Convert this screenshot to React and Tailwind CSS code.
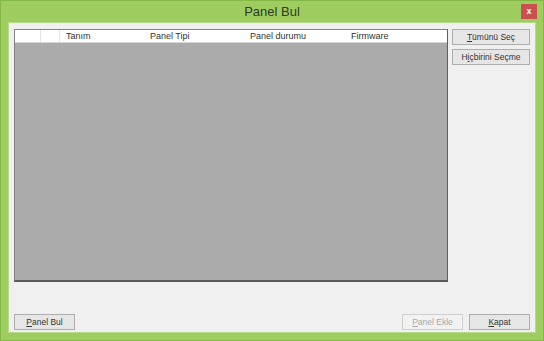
function Btn({ children, disabled, className = "" }) {
  return (
    <button
      className={`h-[16px] border text-[8.5px] leading-none flex items-center justify-center ${
        disabled
          ? "border-[#cfcfcf] bg-[#f2f2f2] text-[#a8a8a8]"
          : "border-[#adadad] bg-[#e6e6e6] text-[#333]"
      } ${className}`}
    >
      {children}
    </button>
  );
}

export default function App() {
  return (
    <div
      className="w-[544px] h-[341px] bg-[#9fcc5e] border border-[#83b846] flex flex-col"
      style={{ fontFamily: '"Liberation Sans", Arial, sans-serif' }}
    >
      <div className="h-[21px] flex items-center relative shrink-0">
        <div className="flex-1 text-center text-[13px] text-[#2f3a25] pt-[1px]">Panel Bul</div>
        <div className="absolute right-[6px] top-[3px] w-[16px] h-[15px] bg-[#c9504f] text-white text-[9px] font-bold flex items-center justify-center">
          x
        </div>
      </div>
      <div className="flex-1 mx-[7px] mb-[7px] bg-[#f0f0f0] border border-[#b7d98a] flex flex-col px-[5px] pt-[6px] pb-[2px]">
        <div className="flex gap-[4px]">
          <div className="w-[435px] h-[253px] border border-[#828282] border-r-[#5e5e5e] border-b-[2px] border-b-[#5a5a5a] bg-[#ababab] flex flex-col">
            <div className="h-[13px] bg-white border-b border-[#d5d5d5] flex text-[9px] text-[#333] leading-[12px]">
              <div className="w-[26px] border-r border-[#e3e3e3]" />
              <div className="w-[19px] border-r border-[#e3e3e3]" />
              <div className="w-[90px] pl-[6px]">Tanım</div>
              <div className="w-[100px]">Panel Tipi</div>
              <div className="w-[101px]">Panel durumu</div>
              <div className="flex-1">Firmware</div>
            </div>
          </div>
          <div className="flex flex-col gap-[4px]">
            <Btn className="w-[78px] h-[15px]">
              <span><u>T</u>ümünü Seç</span>
            </Btn>
            <Btn className="w-[78px]">
              <span>H<u>i</u>çbirini Seçme</span>
            </Btn>
          </div>
        </div>
        <div className="flex-1" />
        <div className="flex items-center">
          <Btn className="w-[61px]">
            <span><u>P</u>anel Bul</span>
          </Btn>
          <div className="flex-1" />
          <Btn disabled className="w-[61px]">
            <span><u>P</u>anel Ekle</span>
          </Btn>
          <Btn className="w-[61px] ml-[6px]">
            <span><u>K</u>apat</span>
          </Btn>
        </div>
      </div>
    </div>
  );
}
